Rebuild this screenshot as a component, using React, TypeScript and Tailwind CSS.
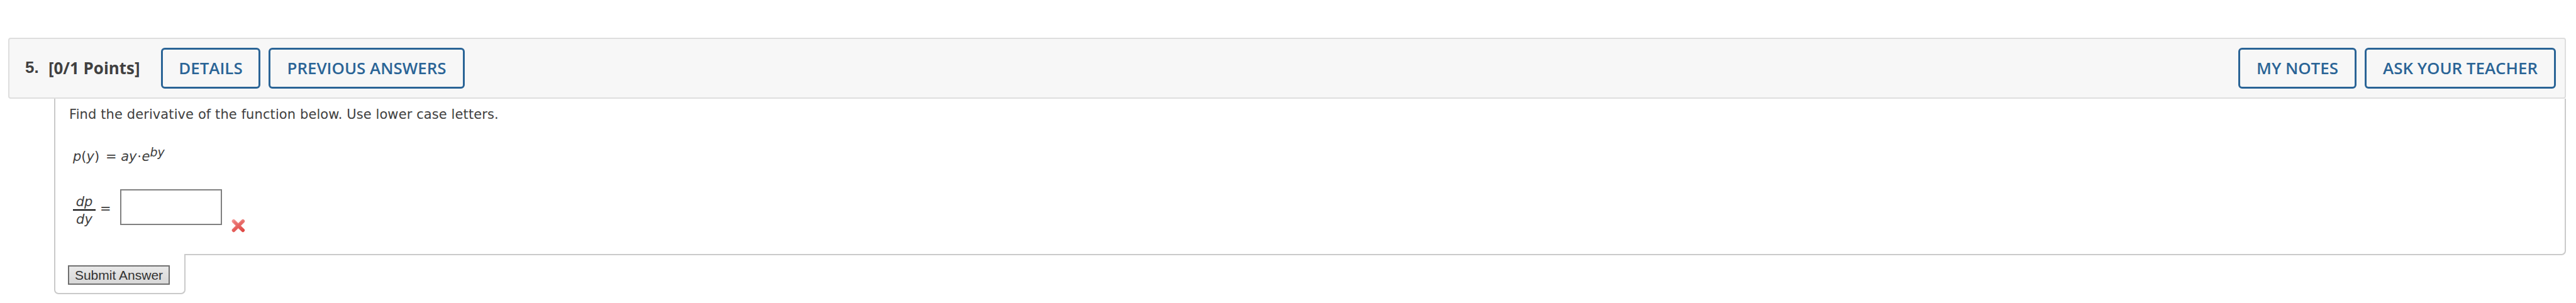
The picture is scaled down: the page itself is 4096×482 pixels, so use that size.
import React, { useState } from 'react';
import clsx from 'clsx';

type HeaderButtonProps = {
  label: string;
  className?: string;
};

function HeaderButton({ label, className }: HeaderButtonProps) {
  return (
    <button
      className={clsx(
        'flex h-[65px] shrink-0 items-center justify-center rounded-[6px] border-[3px] border-[#2a6496] font-["Open_Sans",sans-serif] text-[25.9px] font-semibold whitespace-nowrap text-[#2a6496]',
        className,
      )}
    >
      {label}
    </button>
  );
}

function WrongMark() {
  return (
    <svg className="mt-[47px] ml-[15px] h-[22px] w-[22px] shrink-0" viewBox="0 0 22 22" fill="none" aria-label="Incorrect">
      <defs>
        <linearGradient id="wrong" x1="6" y1="1" x2="16" y2="21" gradientUnits="userSpaceOnUse">
          <stop stopColor="#f19391" />
          <stop offset="1" stopColor="#de4541" />
        </linearGradient>
      </defs>
      <path d="M3.6 3.9 18.2 18.3M18.2 3.9 3.6 18.3" stroke="url(#wrong)" strokeWidth="5.8" strokeLinecap="round" />
      <path d="M4.4 4.7 17.4 17.5M17.4 4.7 4.4 17.5" stroke="#e3544f" strokeOpacity="0.35" strokeWidth="2.4" strokeLinecap="round" />
    </svg>
  );
}

export default function App() {
  const [answer, setAnswer] = useState('');

  return (
    <div className="h-[482px] w-[4096px] overflow-hidden bg-white pt-[60px] pl-[13px] text-[#404040]">
      <header className="flex h-[97px] w-[4067px] items-center rounded-[4px] border-2 border-[#dedede] bg-[#f7f7f7] pr-[14px] pl-[25px]">
        <div className="w-[37px] shrink-0 pb-[2px] font-['Liberation_Sans',sans-serif] text-[25.9px] font-bold">5.</div>
        <div className="w-[179px] shrink-0 font-['Open_Sans',sans-serif] text-[25.9px] font-bold whitespace-nowrap">
          [0/1 Points]
        </div>
        <div className="flex gap-[13px]">
          <HeaderButton label="DETAILS" className="w-[158px]" />
          <HeaderButton label="PREVIOUS ANSWERS" className="w-[312px]" />
        </div>
        <div className="ml-auto flex gap-[13px]">
          <HeaderButton label="MY NOTES" className="w-[188px]" />
          <HeaderButton label="ASK YOUR TEACHER" className="w-[304px]" />
        </div>
      </header>

      <main className="ml-[73px] flex w-[3994px] flex-col font-['DejaVu_Sans',sans-serif] text-[21.03px]">
        <div className="h-[249px] rounded-br-[7px] border-r-2 border-b-2 border-l-2 border-[#cacaca] pl-[22px]">
          <p className="pt-[9px] leading-[32px] tracking-[0.09px]">
            Find the derivative of the function below. Use lower case letters.
          </p>
          <p className="mt-[35px] ml-[6px] h-[32px] leading-[32px]">
            <i>p</i>(<i>y</i>) <span className="ml-[3px]">=</span> <i>ay</i>
            <span className="mx-[0.7px]">·</span>
            <i>e</i>
            <sup className="top-[-7px] text-[19px] leading-none">
              <i>by</i>
            </sup>
          </p>
          <div className="mt-[36px] ml-[6px] flex items-start">
            <div className="mt-[6px] flex w-[36px] flex-col text-center italic">
              <span className="h-[26px] leading-[28px]">dp</span>
              <span className="h-[30px] border-t-2 border-black leading-[27px]">dy</span>
            </div>
            <span className="mt-[18px] ml-[7px] w-[32px] leading-[26px]">=</span>
            <input
              value={answer}
              onChange={(e) => setAnswer(e.target.value)}
              className="h-[57px] w-[162px] border-2 border-[#808080] bg-white px-2"
            />
            <WrongMark />
          </div>
        </div>
        {/* submit tab hangs below the question box and hides its bottom border */}
        <div className="-mt-[2px] h-[64px] w-[209px] rounded-b-[7px] border-r-2 border-b-2 border-l-2 border-[#cacaca] bg-white pt-[18px] pl-[20px]">
          <button className="flex h-[31px] w-[162px] items-center justify-center border-2 border-[#707070] bg-linear-to-b from-[#e8e8e8] to-[#d8d8d8] font-['Liberation_Sans',sans-serif] text-[21.03px] leading-none whitespace-nowrap text-[#333]">
            Submit Answer
          </button>
        </div>
      </main>
    </div>
  );
}
